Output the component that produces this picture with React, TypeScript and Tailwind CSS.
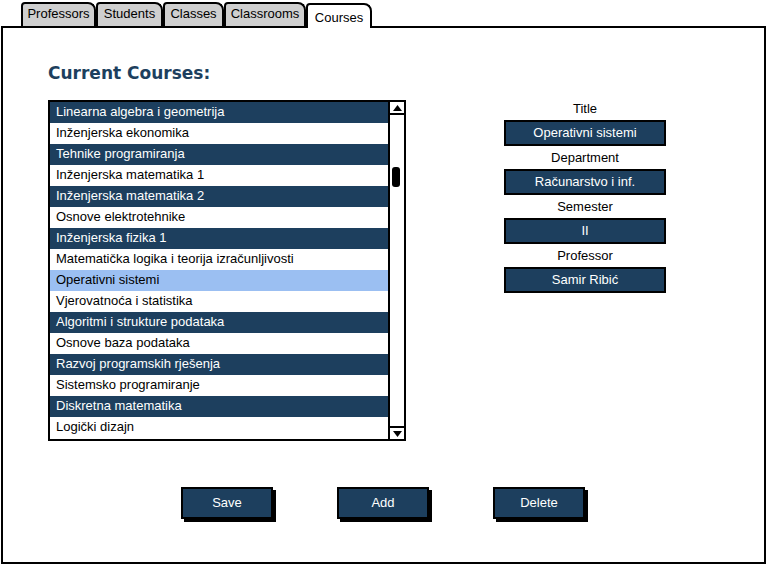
const tabs = ["Professors", "Students", "Classes", "Classrooms", "Courses"];
const tabWidths = ["w-[75px]", "w-[67px]", "w-[61px]", "w-[82px]", "w-[66px]"];

const courses = [
  "Linearna algebra i geometrija",
  "Inženjerska ekonomika",
  "Tehnike programiranja",
  "Inženjerska matematika 1",
  "Inženjerska matematika 2",
  "Osnove elektrotehnike",
  "Inženjerska fizika 1",
  "Matematička logika i teorija izračunljivosti",
  "Operativni sistemi",
  "Vjerovatnoća i statistika",
  "Algoritmi i strukture podataka",
  "Osnove baza podataka",
  "Razvoj programskih rješenja",
  "Sistemsko programiranje",
  "Diskretna matematika",
  "Logički dizajn",
];

const fields = [
  { label: "Title", value: "Operativni sistemi" },
  { label: "Department", value: "Računarstvo i inf." },
  { label: "Semester", value: "II" },
  { label: "Professor", value: "Samir Ribić" },
];

export default function App() {
  return (
    <div className="w-[767px] h-[566px] bg-white text-black font-['Liberation_Sans',sans-serif] overflow-hidden">
      {/* Tabs */}
      <div className="flex pl-[21px] pt-[2px] h-[26px] items-end">
        {tabs.map((t, i) => {
          const active = t === "Courses";
          return (
            <div
              key={t}
              className={`${tabWidths[i]} ${active ? "h-[25px] bg-white relative z-10 mb-[-2px] pt-[5px]" : "h-[24px] bg-[#cfcfcf] pt-[2px]"} border-2 border-b-0 border-black rounded-tl-[4px] rounded-tr-[8px] flex items-start justify-center text-[13px] leading-[15px]`}
            >
              {t}
            </div>
          );
        })}
      </div>

      {/* Panel */}
      <div className="ml-[1px] w-[765px] h-[538px] border-2 border-black pl-[45px] pt-[34px]">
        <h1 className="text-[#1d3f5e] font-bold text-[17px] leading-[22px] font-['DejaVu_Sans',sans-serif]">
          Current Courses:
        </h1>

        <div className="flex mt-[16px]">
          {/* List */}
          <div className="w-[358px] h-[341px] border-2 border-black flex">
            <div className="flex-1 flex flex-col">
              {courses.map((c, i) => {
                const selected = c === "Operativni sistemi";
                const bg = selected ? "bg-[#9bbff2] text-black" : i % 2 === 0 ? "bg-[#1d3f5e] text-white" : "bg-white text-black";
                return (
                  <div key={c} className={`h-[21px] leading-[20px] pl-[6px] text-[13px] ${bg}`}>
                    {c}
                  </div>
                );
              })}
            </div>
            <div className="w-[16px] border-l-2 border-black flex flex-col items-center bg-white">
              <div className="w-full h-[13px] border-b-2 border-black flex items-center justify-center">
                <svg width="9" height="6" viewBox="0 0 9 6"><path d="M0 6 L4.5 0 L9 6 Z" fill="black" /></svg>
              </div>
              <div className="flex-1 w-full relative">
                <div className="absolute left-[2px] top-[52px] w-[8px] h-[20px] bg-black rounded-[3px]" />
              </div>
              <div className="w-full h-[13px] border-t-2 border-black flex items-center justify-center">
                <svg width="9" height="6" viewBox="0 0 9 6"><path d="M0 0 L9 0 L4.5 6 Z" fill="black" /></svg>
              </div>
            </div>
          </div>

          {/* Details */}
          <div className="ml-[98px] w-[162px] flex flex-col items-center -mt-[1px]">
            {fields.map((f) => (
              <div key={f.label} className="w-full flex flex-col items-center">
                <div className="h-[21px] pt-[2px] flex items-start text-[13px] leading-[15px]">{f.label}</div>
                <div className="w-full h-[26px] border-2 border-black bg-[#1d3f5e] text-white text-[13px] flex items-center justify-center mb-[2px]">
                  {f.value}
                </div>
              </div>
            ))}
          </div>
        </div>

        {/* Buttons */}
        <div className="flex ml-[133px] mt-[46px] gap-[64px]">
          {["Save", "Add", "Delete"].map((b) => (
            <div
              key={b}
              className="w-[92px] h-[32px] border-2 border-black bg-[#1d3f5e] text-white text-[13px] flex items-center justify-center shadow-[3px_3px_0_#000]"
            >
              {b}
            </div>
          ))}
        </div>
      </div>
    </div>
  );
}
